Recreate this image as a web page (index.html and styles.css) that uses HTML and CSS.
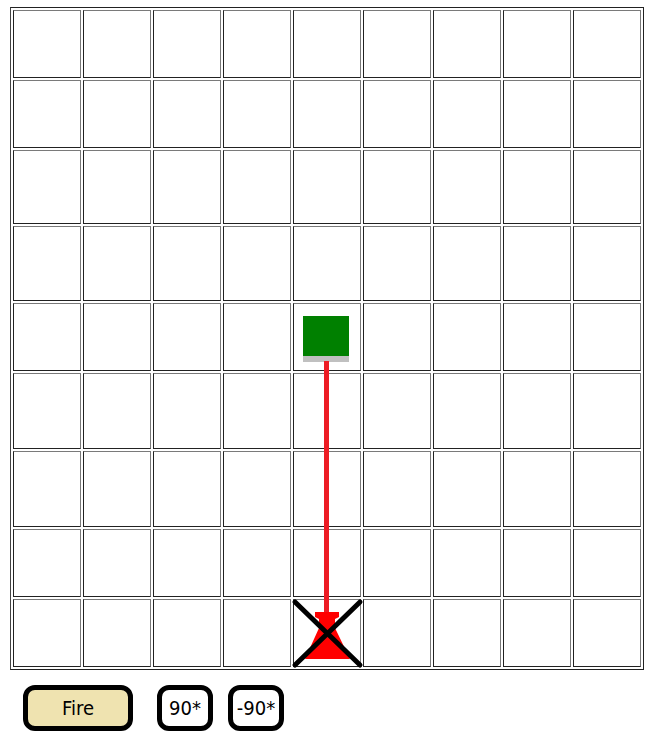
FILE: index.html
```html
<!DOCTYPE html>
<html>
<head>
<meta charset="utf-8">
<link rel="stylesheet" href="styles.css">
</head>
<body>
<div class="board">
  <table class="grid">
    <tr class="r-std"><td></td><td></td><td></td><td></td><td></td><td></td><td></td><td></td><td></td></tr>
    <tr class="r-std"><td></td><td></td><td></td><td></td><td></td><td></td><td></td><td></td><td></td></tr>
    <tr class="r-74"><td></td><td></td><td></td><td></td><td></td><td></td><td></td><td></td><td></td></tr>
    <tr class="r-75"><td></td><td></td><td></td><td></td><td></td><td></td><td></td><td></td><td></td></tr>
    <tr class="r-std"><td></td><td></td><td></td><td></td><td></td><td></td><td></td><td></td><td></td></tr>
    <tr class="r-76"><td></td><td></td><td></td><td></td><td></td><td></td><td></td><td></td><td></td></tr>
    <tr class="r-76"><td></td><td></td><td></td><td></td><td></td><td></td><td></td><td></td><td></td></tr>
    <tr class="r-std"><td></td><td></td><td></td><td></td><td></td><td></td><td></td><td></td><td></td></tr>
    <tr class="r-std"><td></td><td></td><td></td><td></td><td></td><td></td><td></td><td></td><td></td></tr>
  </table>
  <svg class="overlay" width="634" height="664" viewBox="0 0 634 664">
    <rect x="293" y="309" width="46" height="40" fill="#008000"/>
    <rect x="293" y="349" width="46" height="6" fill="#c0c0c0"/>
    <line x1="316.5" y1="354" x2="316.5" y2="606" stroke="#ed1c24" stroke-width="5"/>
    <path d="M305,605 L329,605 L329,610 L325,612 L325,621 L340,652 L295,652 L309,621 L309,612 L305,610 Z" fill="#ff0000"/>
    <line x1="285" y1="595" x2="350" y2="658" stroke="#000" stroke-width="5" stroke-linecap="round"/>
    <line x1="350" y1="595" x2="285" y2="658" stroke="#000" stroke-width="5" stroke-linecap="round"/>
  </svg>
</div>
<div class="controls">
  <button class="btn btn-fire">Fire</button>
  <button class="btn btn-turn">90*</button>
  <button class="btn btn-turn">-90*</button>
</div>
</body>
</html>
```
FILE: styles.css
```css
html, body {
  margin: 0;
  padding: 0;
  background: #fff;
}
body {
  padding: 7px 0 0 10px;
}
.board {
  position: relative;
  width: 634px;
}
.grid {
  border-collapse: separate;
  border-spacing: 2px;
  border: 1px solid #222;
  border-left-color: #444;
  table-layout: fixed;
  width: 634px;
}
.grid td {
  width: 66px;
  padding: 0;
  border: 1px solid #222;
  border-top-color: #7a7a7a;
  border-right-color: #7a7a7a;
}
.r-std td { height: 66px; }
.r-74 td { height: 72px; }
.r-75 td { height: 73px; }
.r-76 td { height: 74px; }
.overlay {
  position: absolute;
  left: 0;
  top: 0;
  pointer-events: none;
}
.controls {
  display: flex;
  align-items: center;
  padding: 15px 0 0 13px;
}
.btn {
  box-sizing: border-box;
  height: 46px;
  border: 5px solid #000;
  border-radius: 12px;
  background: #fff;
  color: #000;
  font-family: "DejaVu Sans Condensed", "DejaVu Sans", sans-serif;
  font-stretch: condensed;
  font-size: 20px;
  padding: 0;
}
.btn-fire {
  width: 110px;
  background: #efe3b0;
  margin-right: 24px;
}
.btn-turn {
  width: 56px;
  margin-right: 15px;
}
```
